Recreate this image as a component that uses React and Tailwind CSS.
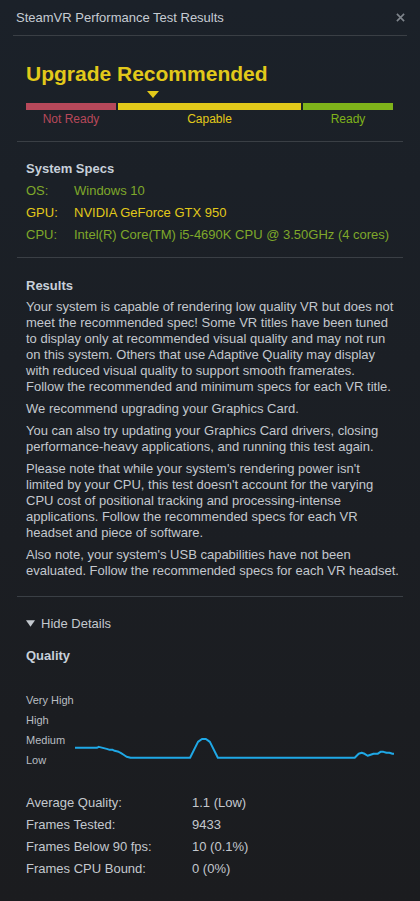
export default function App() {
  const font = { fontFamily: '"Liberation Sans", Arial, sans-serif' };
  // lines broken as in the reference
  const paras = [
    [
      "Your system is capable of rendering low quality VR but does not",
      "meet the recommended spec! Some VR titles have been tuned",
      "to display only at recommended visual quality and may not run",
      "on this system. Others that use Adaptive Quality may display",
      "with reduced visual quality to support smooth framerates.",
      "Follow the recommended and minimum specs for each VR title.",
    ],
    ["We recommend upgrading your Graphics Card."],
    [
      "You can also try updating your Graphics Card drivers, closing",
      "performance-heavy applications, and running this test again.",
    ],
    [
      "Please note that while your system's rendering power isn't",
      "limited by your CPU, this test doesn't account for the varying",
      "CPU cost of positional tracking and processing-intense",
      "applications. Follow the recommended specs for each VR",
      "headset and piece of software.",
    ],
    [
      "Also note, your system's USB capabilities have not been",
      "evaluated. Follow the recommended specs for each VR headset.",
    ],
  ];
  const stats = [
    ["Average Quality:", "1.1 (Low)"],
    ["Frames Tested:", "9433"],
    ["Frames Below 90 fps:", "10 (0.1%)"],
    ["Frames CPU Bound:", "0 (0%)"],
  ];

  return (
    <div
      className="h-[901px] w-[420px] overflow-hidden bg-gradient-to-b from-[#1b2129] to-[#1b1c1f] text-[13px] text-[#c3c8ce]"
      style={font}
    >
      {/* title bar */}
      <div className="mx-[13px] flex h-[36px] items-center justify-between border-b border-[#3a3f45] pl-[3px] pr-[2px]">
        <span className="text-[13px] text-[#c6ccd3]">SteamVR Performance Test Results</span>
        <svg width="9" height="9" viewBox="0 0 10 10" className="text-[#7f858c]">
          <path d="M1 1L9 9M9 1L1 9" stroke="currentColor" strokeWidth="1.8" />
        </svg>
      </div>

      {/* verdict */}
      <div className="mx-[17px] border-b border-[#3a3f45] px-[9px] pb-[13px] pt-[25px]">
        <div className="text-[21px] font-bold leading-[26px] text-[#e2c91a]">Upgrade Recommended</div>
        <div className="mt-[4px] h-[8px] pl-[121px]">
          <svg width="12" height="7" viewBox="0 0 12 7">
            <path d="M0 0H12L6 7Z" fill="#e2c91a" />
          </svg>
        </div>
        <div className="mt-[4px] flex gap-[2px]">
          <div className="flex w-[90px] flex-col items-center">
            <div className="h-[7px] w-full bg-[#b7485a]" />
            <span className="text-[12px] text-[#b7485a]">Not Ready</span>
          </div>
          <div className="flex w-[183px] flex-col items-center">
            <div className="h-[7px] w-full bg-[#e2c91a]" />
            <span className="text-[12px] text-[#e2c91a]">Capable</span>
          </div>
          <div className="flex w-[90px] flex-col items-center">
            <div className="h-[7px] w-full bg-[#7fb31a]" />
            <span className="text-[12px] text-[#7fb31a]">Ready</span>
          </div>
        </div>
      </div>

      {/* system specs */}
      <div className="mx-[17px] border-b border-[#3a3f45] pb-[14px] pl-[9px] pr-[2px] pt-[17px]">
        <div className="text-[13px] font-bold text-[#c7d0da]">System Specs</div>
        <div className="mt-[4px] flex flex-col gap-[6px] leading-[16px]">
          <div className="flex text-[#7fa82a]">
            <span className="w-[48px]">OS:</span>
            <span>Windows 10</span>
          </div>
          <div className="flex text-[#e2c91a]">
            <span className="w-[48px]">GPU:</span>
            <span>NVIDIA GeForce GTX 950</span>
          </div>
          <div className="flex text-[#7fa82a]">
            <span className="w-[48px]">CPU:</span>
            <span>Intel(R) Core(TM) i5-4690K CPU @ 3.50GHz (4 cores)</span>
          </div>
        </div>
      </div>

      {/* results */}
      <div className="mx-[17px] border-b border-[#3a3f45] pb-[17px] pl-[9px] pr-[1px] pt-[18px]">
        <div className="text-[13px] font-bold text-[#c7d0da]">Results</div>
        <div className="mt-[4px] flex flex-col gap-[6px] leading-[16px]">
          {paras.map((lines, i) => (
            <p key={i} className="whitespace-nowrap">
              {lines.map((l, j) => (
                <span key={j} className="block">
                  {l}
                </span>
              ))}
            </p>
          ))}
        </div>
      </div>

      {/* details */}
      <div className="px-[26px] pt-[17px]">
        <div className="flex items-center gap-[6px] text-[13px] text-[#c3c8ce]">
          <svg width="9" height="7" viewBox="0 0 10 7">
            <path d="M0 0H10L5 7Z" fill="#c3c8ce" />
          </svg>
          <span>Hide Details</span>
        </div>
        <div className="mt-[12px] text-[13px] font-bold text-[#c7d0da]">Quality</div>

        <div className="mt-[25px] flex">
          <div className="flex w-[49px] flex-col whitespace-nowrap text-[11px] leading-[20px] text-[#b9bdc2]">
            <span>Very High</span>
            <span>High</span>
            <span>Medium</span>
            <span>Low</span>
          </div>
          <svg width="322" height="80" viewBox="0 0 322 80" className="self-end">
            <polyline
              fill="none"
              stroke="#1fa8e6"
              strokeWidth="2"
              strokeLinejoin="round"
              points="0,58 22,58 24,57 28,58 32,59 35,60 38,60 40,61 44,62 46,63 49,65 52,67 56,68 116,68 124,52 128,49 132,49 136,52 144,68 282,68 286,64 289,63 292,64 295,66 298,65 301,64 305,64 308,62 311,62 314,63 317,63 320,64 322,64"
            />
          </svg>
        </div>

        <div className="mt-[25px] flex flex-col gap-[6px] leading-[16px]">
          {stats.map(([k, v]) => (
            <div key={k} className="flex">
              <span className="w-[166px]">{k}</span>
              <span>{v}</span>
            </div>
          ))}
        </div>
      </div>
    </div>
  );
}
